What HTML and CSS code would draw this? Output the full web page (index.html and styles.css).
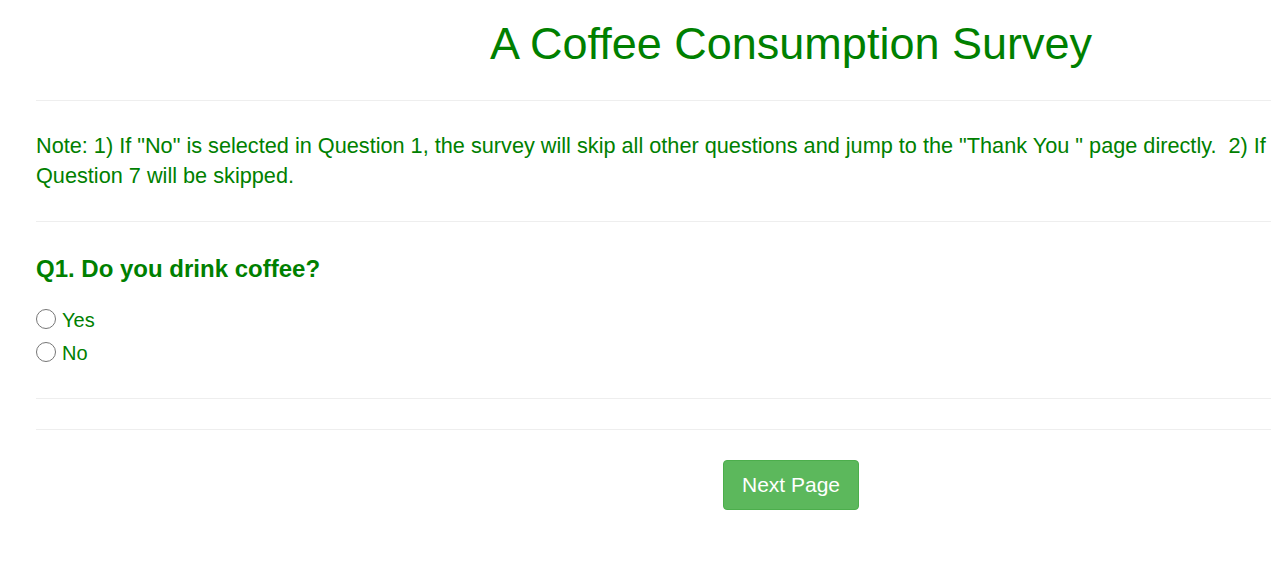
FILE: index.html
```html
<!DOCTYPE html>
<html>
<head>
<meta charset="utf-8">
<title>A Coffee Consumption Survey</title>
<link rel="stylesheet" href="styles.css">
</head>
<body>
<div class="page">
  <h1 class="title">A Coffee Consumption Survey</h1>
  <hr class="rule">
  <p class="note">Note: 1) If "No" is selected in Question 1, the survey will skip all other questions and jump to the "Thank You " page directly.&nbsp; 2) If "No" is selected in Question 6,<br>Question 7 will be skipped.</p>
  <hr class="rule">
  <div class="question">
    <h2 class="q-title">Q1. Do you drink coffee?</h2>
    <label class="option"><input type="radio" name="q1" value="yes"><span>Yes</span></label>
    <label class="option"><input type="radio" name="q1" value="no"><span>No</span></label>
  </div>
  <hr class="rule">
  <hr class="rule">
  <div class="actions">
    <button class="btn-next" type="button">Next Page</button>
  </div>
</div>
</body>
</html>
```
FILE: styles.css
```css
html, body {
  margin: 0;
  padding: 0;
  overflow: hidden;
  background: #fff;
}
body {
  font-family: "Liberation Sans", Arial, sans-serif;
  color: #008000;
}
.page {
  width: 1510px;
  margin-left: 36px;
}
.title {
  margin: 0;
  padding-top: 18px;
  font-size: 45px;
  font-weight: normal;
  line-height: 52px;
  text-align: center;
  color: #008000;
  height: 82px;
}
.rule {
  border: 0;
  border-top: 1px solid #eeeeee;
  margin: 0;
  height: 0;
}
.note {
  margin: 0;
  padding: 30px 0 30px;
  font-size: 21.7px;
  line-height: 30px;
  white-space: nowrap;
}
.question {
  padding: 30px 0 28px;
}
.q-title {
  margin: 0 0 18px;
  font-size: 24px;
  font-weight: bold;
  line-height: 34px;
}
.option {
  display: flex;
  align-items: center;
  font-size: 20px;
  height: 33px;
}
.option input {
  width: 20px;
  height: 20px;
  margin: -3px 6px 0 0;
}
.option span {
  line-height: 33px;
}
.rule + .rule {
  margin-top: 30px;
}
.actions {
  display: flex;
  justify-content: center;
  padding-top: 30px;
}
.btn-next {
  font-family: "Liberation Sans", Arial, sans-serif;
  font-size: 21px;
  line-height: 28px;
  padding: 10px 18px;
  color: #fff;
  background: #5cb85c;
  border: 1px solid #4cae4c;
  border-radius: 4px;
}
```
